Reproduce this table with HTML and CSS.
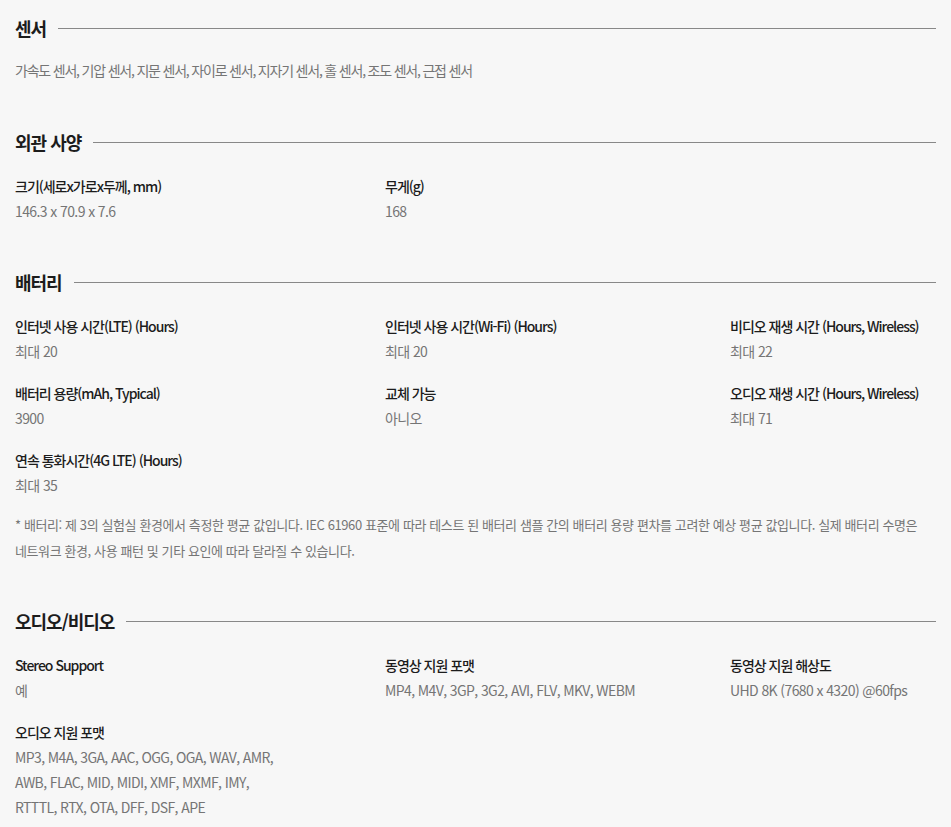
FILE: index.html
```html
<!DOCTYPE html>
<html lang="ko">
<head>
<meta charset="utf-8">
<link rel="stylesheet" href="styles.css">
</head>
<body>
<div class="page">
  <section class="spec">
    <h2 class="spec-title"><span>센서</span></h2>
    <p class="plain">가속도 센서, 기압 센서, 지문 센서, 자이로 센서, 지자기 센서, 홀 센서, 조도 센서, 근접 센서</p>
  </section>

  <section class="spec">
    <h2 class="spec-title"><span>외관 사양</span></h2>
    <div class="grid">
      <div class="item"><div class="label">크기(세로x가로x두께, mm)</div><div class="value">146.3 x 70.9 x 7.6</div></div>
      <div class="item"><div class="label">무게(g)</div><div class="value">168</div></div>
    </div>
  </section>

  <section class="spec">
    <h2 class="spec-title"><span>배터리</span></h2>
    <div class="grid">
      <div class="item"><div class="label">인터넷 사용 시간(LTE) (Hours)</div><div class="value">최대 20</div></div>
      <div class="item"><div class="label">인터넷 사용 시간(Wi-Fi) (Hours)</div><div class="value">최대 20</div></div>
      <div class="item"><div class="label">비디오 재생 시간 (Hours, Wireless)</div><div class="value">최대 22</div></div>
      <div class="item"><div class="label">배터리 용량(mAh, Typical)</div><div class="value">3900</div></div>
      <div class="item"><div class="label">교체 가능</div><div class="value">아니오</div></div>
      <div class="item"><div class="label">오디오 재생 시간 (Hours, Wireless)</div><div class="value">최대 71</div></div>
      <div class="item"><div class="label">연속 통화시간(4G LTE) (Hours)</div><div class="value">최대 35</div></div>
    </div>
    <p class="note">* 배터리: 제 3의 실험실 환경에서 측정한 평균 값입니다. IEC 61960 표준에 따라 테스트 된 배터리 샘플 간의 배터리 용량 편차를 고려한 예상 평균 값입니다. 실제 배터리 수명은 네트워크 환경, 사용 패턴 및 기타 요인에 따라 달라질 수 있습니다.</p>
  </section>

  <section class="spec">
    <h2 class="spec-title"><span>오디오/비디오</span></h2>
    <div class="grid">
      <div class="item"><div class="label">Stereo Support</div><div class="value">예</div></div>
      <div class="item"><div class="label">동영상 지원 포맷</div><div class="value">MP4, M4V, 3GP, 3G2, AVI, FLV, MKV, WEBM</div></div>
      <div class="item"><div class="label">동영상 지원 해상도</div><div class="value">UHD 8K (7680 x 4320) @60fps</div></div>
      <div class="item"><div class="label">오디오 지원 포맷</div><div class="value narrow">MP3, M4A, 3GA, AAC, OGG, OGA, WAV, AMR, AWB, FLAC, MID, MIDI, XMF, MXMF, IMY, RTTTL, RTX, OTA, DFF, DSF, APE</div></div>
    </div>
  </section>
</div>
</body>
</html>
```

FILE: styles.css
```css
html, body {
  margin: 0;
  padding: 0;
  background: #f7f7f7;
}
body {
  font-family: "Noto Sans CJK KR", "Noto Sans", sans-serif;
  color: #1c1c1c;
  word-break: keep-all;
}
.page {
  padding: 13px 15px 0 15px;
}
.spec {
  padding-bottom: 43px;
}
.spec-title {
  display: flex;
  align-items: center;
  gap: 12px;
  margin: 0 0 17px 0;
  height: 30px;
  font-size: 18px;
  font-weight: 700;
  letter-spacing: -1px;
  line-height: 30px;
}
.spec-title::after {
  content: "";
  flex: 1;
  height: 1px;
  background: #888;
}
.plain {
  margin: -2px 0 1px 0;
  font-size: 14px;
  line-height: 25px;
  color: #757575;
  letter-spacing: -1.2px;
}
.grid {
  display: grid;
  grid-template-columns: 370px 345px 1fr;
  row-gap: 17px;
}
.label {
  font-size: 14px;
  font-weight: 500;
  line-height: 25px;
  letter-spacing: -1px;
  color: #1c1c1c;
}
.value {
  font-size: 14px;
  line-height: 25px;
  letter-spacing: -0.6px;
  color: #757575;
}
.value.narrow {
  max-width: 275px;
}
.note {
  margin: 14px 0 -1px 0;
  font-size: 13px;
  line-height: 26px;
  color: #757575;
  letter-spacing: -0.4px;
}
```
